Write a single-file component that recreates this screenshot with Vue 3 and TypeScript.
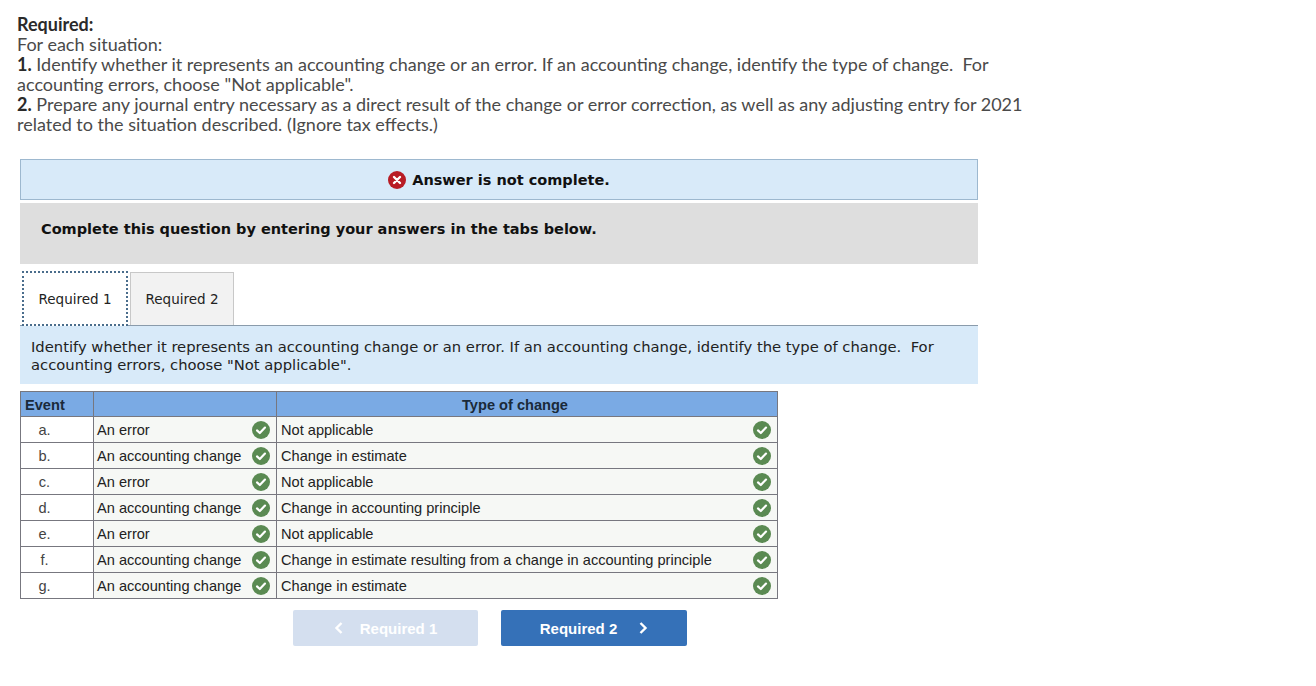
<script setup lang="ts">
interface Row { event: string; kind: string; type: string }
const rows: Row[] = [
  { event: 'a.', kind: 'An error', type: 'Not applicable' },
  { event: 'b.', kind: 'An accounting change', type: 'Change in estimate' },
  { event: 'c.', kind: 'An error', type: 'Not applicable' },
  { event: 'd.', kind: 'An accounting change', type: 'Change in accounting principle' },
  { event: 'e.', kind: 'An error', type: 'Not applicable' },
  { event: 'f.', kind: 'An accounting change', type: 'Change in estimate resulting from a change in accounting principle' },
  { event: 'g.', kind: 'An accounting change', type: 'Change in estimate' },
]
</script>

<template>
  <div class="page">
    <div class="intro">
      <div><b>Required:</b></div>
      <div>For each situation:</div>
      <div><b>1.</b> Identify whether it represents an accounting change or an error. If an accounting change, identify the type of change.&nbsp; For<br />accounting errors, choose "Not applicable".</div>
      <div><b>2.</b> Prepare any journal entry necessary as a direct result of the change or error correction, as well as any adjusting entry for 2021<br />related to the situation described. (Ignore tax effects.)</div>
    </div>

    <div class="main">
      <div class="alert">
        <svg class="x-icon" viewBox="0 0 18 18" width="18" height="18">
          <circle cx="9" cy="9" r="9" fill="#b81c25" />
          <path d="M6 6l6 6M12 6l-6 6" stroke="#fff" stroke-width="2.4" stroke-linecap="round" />
        </svg>
        <span>Answer is not complete.</span>
      </div>
      <div class="complete">Complete this question by entering your answers in the tabs below.</div>

      <div class="tabs">
        <div class="tab active">Required 1</div>
        <div class="tab">Required 2</div>
      </div>
      <div class="panel">Identify whether it represents an accounting change or an error. If an accounting change, identify the type of change.&nbsp; For<br />accounting errors, choose "Not applicable".</div>

      <table class="grid">
        <colgroup>
          <col class="c1" />
          <col class="c2" />
          <col class="c3" />
        </colgroup>
        <thead>
          <tr>
            <th class="ev">Event</th>
            <th></th>
            <th class="type-head">Type of change</th>
          </tr>
        </thead>
        <tbody>
          <tr v-for="r in rows" :key="r.event">
            <td class="ev-cell">{{ r.event }}</td>
            <td>
              <div class="cell">
                <span>{{ r.kind }}</span>
                <svg class="check" viewBox="0 0 18 18" width="18" height="18">
                  <circle cx="9" cy="9" r="9" fill="#5a8a52" />
                  <path d="M5 9.4l2.8 2.6L13 6.6" fill="none" stroke="#fff" stroke-width="2.2" stroke-linecap="round" stroke-linejoin="round" />
                </svg>
              </div>
            </td>
            <td>
              <div class="cell">
                <span>{{ r.type }}</span>
                <svg class="check" viewBox="0 0 18 18" width="18" height="18">
                  <circle cx="9" cy="9" r="9" fill="#5a8a52" />
                  <path d="M5 9.4l2.8 2.6L13 6.6" fill="none" stroke="#fff" stroke-width="2.2" stroke-linecap="round" stroke-linejoin="round" />
                </svg>
              </div>
            </td>
          </tr>
        </tbody>
      </table>

      <div class="nav">
        <button class="btn prev" type="button">
          <svg viewBox="0 0 10 14" width="10" height="14"><path d="M7.5 2L2.5 7l5 5" fill="none" stroke="currentColor" stroke-width="2.4" /></svg>
          <span>Required 1</span>
        </button>
        <button class="btn next" type="button">
          <span>Required 2</span>
          <svg viewBox="0 0 10 14" width="10" height="14"><path d="M2.5 2l5 5-5 5" fill="none" stroke="currentColor" stroke-width="2.4" /></svg>
        </button>
      </div>
    </div>
  </div>
</template>

<style>
html, body { margin: 0; background: #fff; }
</style>

<style scoped>
.page {
  width: 1316px;
  height: 686px;
  box-sizing: border-box;
  padding-top: 14px;
  overflow: hidden;
}
.intro {
  margin-left: 17px;
  font: 18px/20px Lato, "Liberation Sans", sans-serif;
  color: #4a4a4a;
  white-space: nowrap;
}
.intro b { color: #2a2a2a; }
.main {
  width: 958px;
  margin: 25px 0 0 20px;
}
.alert {
  height: 39px;
  border: 1px solid #9db8cf;
  background: #d8eaf9;
  display: flex;
  align-items: center;
  justify-content: center;
  gap: 6px;
  font: bold 14.5px "DejaVu Sans", Verdana, sans-serif;
  color: #111;
}
.complete {
  height: 61px;
  margin-top: 3px;
  box-sizing: border-box;
  padding: 16px 0 0 21px;
  background: #dedede;
  font: bold 14.5px/20px "DejaVu Sans", Verdana, sans-serif;
  color: #111;
}
.tabs {
  display: flex;
  align-items: flex-end;
  height: 62px;
  padding-left: 2px;
  gap: 2px;
  border-bottom: 1px solid #8a9bab;
  box-sizing: border-box;
}
.tab {
  width: 104px;
  height: 53px;
  box-sizing: border-box;
  border: 1px solid #c8c8c8;
  border-bottom: 0;
  background: #f2f2f2;
  display: flex;
  align-items: center;
  justify-content: center;
  font: 13.5px "DejaVu Sans", Verdana, sans-serif;
  color: #222;
}
.tab.active {
  width: 106px;
  height: 55px;
  margin-bottom: -1px;
  border: 2px dotted #4a6d8c;
  background: #fff;
}
.panel {
  height: 58px;
  box-sizing: border-box;
  padding: 12px 0 0 11px;
  background: #d8eaf9;
  font: 14.75px/18px "DejaVu Sans", Verdana, sans-serif;
  color: #222;
  white-space: nowrap;
}
.grid {
  margin-top: 7px;
  width: 758px;
  table-layout: fixed;
  border-collapse: collapse;
  font: 14.6px "Liberation Sans", Arial, sans-serif;
  color: #222;
}
.c1 { width: 73px; }
.c2 { width: 183px; }
.grid th, .grid td {
  border: 1px solid #77777f;
  padding: 0;
  height: 26px;
  box-sizing: border-box;
}
.grid th {
  height: 25px;
  padding-top: 2px;
  background: #7aaae4;
  font-weight: bold;
  text-align: center;
  color: #1a2a3a;
}
.grid th.ev { text-align: left; padding-left: 4px; }
.grid th.type-head { padding-right: 24px; }
.grid td { background: #f6f8f5; }
.grid td.ev-cell {
  text-align: center;
  padding-right: 25px;
  color: #444;
  background: #fff;
}
.cell {
  display: flex;
  align-items: center;
  justify-content: space-between;
  padding: 0 6px 0 3px;
  white-space: nowrap;
}
.grid td:last-child .cell { padding-left: 4px; }
.check { flex: none; }
.nav {
  display: flex;
  gap: 23px;
  margin: 11px 0 0 273px;
}
.btn {
  width: 185px;
  height: 36px;
  border: 0;
  border-radius: 2px;
  display: flex;
  align-items: center;
  justify-content: center;
  gap: 16px;
  padding: 0;
  font: bold 15px "Liberation Sans", Arial, sans-serif;
  color: #fff;
}
.btn.prev { background: #d4dfef; }
.btn.next { background: #3571b8; width: 186px; gap: 21px; }
.x-icon { flex: none; }
</style>
